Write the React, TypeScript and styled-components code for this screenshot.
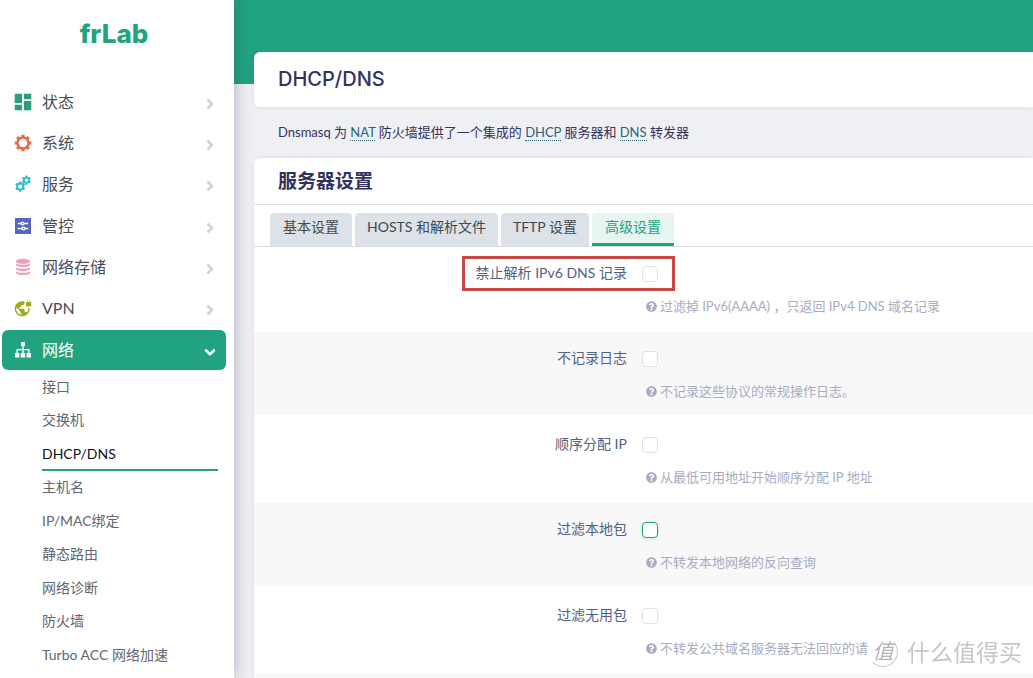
import React from "react";
import styled, { createGlobalStyle, css } from "styled-components";
import { MdDashboard, MdVpnLock } from "react-icons/md";
import { FaQuestionCircle } from "react-icons/fa";

const green = "#22a37f";

const GlobalStyle = createGlobalStyle`
  * { box-sizing: border-box; }
  body {
    margin: 0;
    background: #eff0f3;
    color: #32325d;
    font-family: Lato, "Noto Sans CJK SC", sans-serif;
    font-size: 14px;
  }
  h1, h2, p, ul { margin: 0; padding: 0; }
  ul { list-style: none; }
  a { color: inherit; text-decoration: none; }
`;

const Page = styled.div`
  display: flex;
  height: 100vh;
  overflow: hidden;
`;

const Sidebar = styled.aside`
  flex: 0 0 234px;
  z-index: 1;
  background: #fff;
  box-shadow: 0 0 16px rgba(40, 45, 80, 0.35);
`;

const Brand = styled.a`
  display: block;
  height: 82px;
  padding-right: 6px;
  color: ${green};
  font-family: Inter, sans-serif;
  font-size: 26px;
  font-weight: 800;
  line-height: 68px;
  text-align: center;
`;

const Menu = styled.ul`
  padding: 0 8px 0 2px;
`;

const MenuItem = styled.li`
  margin-bottom: 1px;
  &:nth-child(3n) { margin-bottom: 2px; }
`;

const MenuLink = styled.a<{ $active?: boolean }>`
  display: flex;
  align-items: center;
  height: 40px;
  padding: 0 10px 0 12px;
  border-radius: 6px;
  color: #4a4d55;
  font-size: 16px;
  line-height: 24px;
  ${(p) => p.$active && css`
    background: ${green};
    color: #fff;
  `}
`;

const MenuIcon = styled.span<{ $color: string }>`
  display: flex;
  justify-content: center;
  width: 18px;
  margin-right: 10px;
  color: ${(p) => p.$color};
  svg { flex-shrink: 0; }
`;

const Arrow = styled.span`
  display: flex;
  justify-content: center;
  width: 12px;
  margin-left: auto;
  padding-top: 3px;
  color: #ced4da;
  ${MenuLink}[aria-expanded="true"] & { color: #fff; }
`;

const SubMenu = styled.ul`
  padding: 1px 8px 0 40px;
`;

const SubItem = styled.li`
  &:nth-child(even) { margin-bottom: 1px; }
`;

const SubLink = styled.a<{ $active?: boolean }>`
  display: block;
  height: 33px;
  border-bottom: 2px solid ${(p) => (p.$active ? green : "transparent")};
  color: ${(p) => (p.$active ? "#111" : "#63666e")};
  line-height: 32px;
`;

const Main = styled.main`
  flex: 1;
  min-width: 0;
  padding: 52px 0 0 20px;
  background: linear-gradient(${green} 84px, transparent 84px);
`;

const Card = styled.section`
  background: #fff;
  border-radius: 6px 0 0 6px;
  box-shadow: 0 0 4px rgba(50, 50, 93, 0.1);
`;

const PageTitle = styled.h1`
  padding: 12px 24px;
  font-family: Inter, sans-serif;
  font-size: 20px;
  font-weight: 500;
  line-height: 31px;
`;

const Intro = styled.p`
  padding: 15px 24px 16px;
  font-size: 13px;
  line-height: 20px;
`;

const Abbr = styled.abbr`
  color: #2b6379;
  text-decoration: none;
  border-bottom: 1px dotted #2b6379;
`;

const SectionTitle = styled.h2`
  padding: 8px 24px;
  border-bottom: 1px solid #e0e3e6;
  font-size: 19px;
  font-weight: 700;
  line-height: 30px;
`;

const Tabs = styled.div`
  display: flex;
  gap: 3px;
  padding: 8px 16px 0;
  border-bottom: 1px solid #d9dcdf;
`;

const Tab = styled.button<{ $active?: boolean }>`
  min-width: 82px;
  height: 33px;
  padding: 0 12px;
  border: 0;
  border-bottom: 3px solid ${(p) => (p.$active ? green : "#dce2e7")};
  border-radius: 4px 4px 0 0;
  background: ${(p) => (p.$active ? "#e6f5f1" : "#dce2e7")};
  color: ${(p) => (p.$active ? green : "#43484e")};
  font: inherit;
  line-height: 28px;
  padding-bottom: 2px;
`;

const Options = styled.div`
  display: flex;
  flex-direction: column;
`;

const Row = styled.div`
  display: grid;
  grid-template-columns: 48% 1fr;
  height: 83px;
  &:nth-child(even) {
    margin: 2px 0 3px;
    background: #f8f8f8;
  }
`;

const Label = styled.label`
  justify-self: end;
  position: relative;
  height: 52px;
  margin-right: 1px;
  color: #525f7f;
  line-height: 52px;
`;

const Highlight = styled.span`
  position: absolute;
  inset: 9px -48px 8px -14px;
  border: 3px solid #c94a45;
  pointer-events: none;
`;

const Field = styled.div`
  padding: 19px 0 0 14px;
`;

const Checkbox = styled.input`
  display: block;
  appearance: none;
  width: 16px;
  height: 16px;
  margin: 0;
  border: 1px solid #dee2e6;
  border-radius: 4px;
  background: #fff;
  &.hover {
    border-color: ${green};
    box-shadow: 0 1px 4px rgba(34, 163, 127, 0.2);
  }
`;

const Hint = styled.p`
  display: flex;
  align-items: center;
  gap: 3px;
  padding: 14px 0 0 4px;
  color: #a9acc0;
  font-size: 13px;
  line-height: 20px;
  white-space: nowrap;
`;

const Watermark = styled.div`
  position: fixed;
  right: 11px;
  bottom: 10px;
  display: flex;
  align-items: center;
  gap: 9px;
  color: #c6c6c6;
  font-size: 23px;
  line-height: 32px;
  text-shadow: -1px -1px 0 #fff;
`;

const Seal = styled.span`
  width: 30px;
  height: 30px;
  border: 1px solid transparent;
  border-right-color: #c4c4c4;
  border-bottom-color: #c4c4c4;
  border-radius: 50%;
  background: #fff;
  color: #b4b4b4;
  font-size: 21px;
  font-style: italic;
  line-height: 26px;
  text-align: center;
`;

const teeth = [0, 45, 90, 135, 180, 225, 270, 315];
const cogTeeth = [0, 60, 120, 180, 240, 300];

const GearIcon = () => (
  <svg width="18" height="18" viewBox="0 0 18 18">
    <circle cx="9" cy="9" r="5.5" fill="none" stroke="currentColor" strokeWidth="2.4" />
    {teeth.map((a) => (
      <rect key={a} x="7.4" y="0.8" width="3.2" height="3" fill="currentColor" transform={`rotate(${a} 9 9)`} />
    ))}
  </svg>
);

const Cog = ({ x, y, r }: { x: number; y: number; r: number }) => (
  <g transform={`translate(${x} ${y})`}>
    <circle r={r} fill="none" stroke="currentColor" strokeWidth="1.9" />
    {cogTeeth.map((a) => (
      <rect key={a} x="-1.1" y={-r - 2} width="2.2" height="1.8" fill="currentColor" transform={`rotate(${a})`} />
    ))}
  </g>
);

const CogPairIcon = () => (
  <svg width="18" height="18" viewBox="0 0 18 18">
    <Cog x={6.2} y={11.6} r={3.1} />
    <Cog x={12.4} y={5.2} r={2.6} />
  </svg>
);

const SlidersIcon = () => (
  <svg width="16" height="16" viewBox="0 0 16 16">
    <rect width="16" height="16" fill="currentColor" />
    <g fill="none" stroke="#fff" strokeWidth="1.3">
      <path d="M2.6 5.5h3.5M8.9 5.5h4.3M2.6 10.5h4.5M9.9 10.5h3.3" />
      <circle cx="7.5" cy="5.5" r="1.4" />
      <circle cx="8.5" cy="10.5" r="1.4" />
    </g>
  </svg>
);

const DiscsIcon = () => (
  <svg width="16" height="18" viewBox="0 0 16 18" fill="currentColor">
    <ellipse cx="8" cy="3.4" rx="7" ry="2.6" />
    {[0, 4, 8].map((y) => (
      <path key={y} d={`M1 ${5.2 + y}C3 ${7.4 + y} 13 ${7.4 + y} 15 ${5.2 + y}V${7 + y}C14 ${9.8 + y} 2 ${9.8 + y} 1 ${7 + y}Z`} />
    ))}
  </svg>
);

const SitemapIcon = () => (
  <svg width="18" height="18" viewBox="0 0 18 18" fill="currentColor">
    <path d="M7 1h4v4H7zM1 12h4.4v4.4H1zM6.8 12h4.4v4.4H6.8zM12.6 12H17v4.4h-4.4z" />
    <path d="M9 5v7M3.2 12V8.6h11.6V12" fill="none" stroke="currentColor" strokeWidth="1.4" />
  </svg>
);

const ChevronIcon = ({ down }: { down?: boolean }) => (
  <svg width="12" height="12" viewBox="0 0 12 12" fill="none" stroke="currentColor" strokeWidth="2.6">
    <path d={down ? "M1.3 3.8L6 8.3l4.7-4.5" : "M3.4 1.5L7.9 6l-4.5 4.5"} />
  </svg>
);

const menu = [
  { text: "状态", color: "#2a9d7c", icon: <MdDashboard size={22} /> },
  { text: "系统", color: "#e8694a", icon: <GearIcon /> },
  { text: "服务", color: "#35bcd4", icon: <CogPairIcon /> },
  { text: "管控", color: "#5a66b8", icon: <SlidersIcon /> },
  { text: "网络存储", color: "#eda0b6", icon: <DiscsIcon /> },
  { text: "VPN", color: "#a0a91e", icon: <MdVpnLock size={18} /> },
];

const subMenu = ["接口", "交换机", "DHCP/DNS", "主机名", "IP/MAC绑定", "静态路由", "网络诊断", "防火墙", "Turbo ACC 网络加速"];

const tabs = ["基本设置", "HOSTS 和解析文件", "TFTP 设置", "高级设置"];

const options = [
  { id: "filter_aaaa", label: "禁止解析 IPv6 DNS 记录", hint: "过滤掉 IPv6(AAAA) ，只返回 IPv4 DNS 域名记录", marked: true },
  { id: "quietdhcp", label: "不记录日志", hint: "不记录这些协议的常规操作日志。" },
  { id: "sequential_ip", label: "顺序分配 IP", hint: "从最低可用地址开始顺序分配 IP 地址" },
  { id: "boguspriv", label: "过滤本地包", hint: "不转发本地网络的反向查询", hover: true },
  { id: "filterwin2k", label: "过滤无用包", hint: "不转发公共域名服务器无法回应的请" },
];

export default function App() {
  return (
    <>
      <GlobalStyle />
      <Page>
        <Sidebar>
          <Brand href="#">frLab</Brand>
          <Menu>
            {menu.map((m) => (
              <MenuItem key={m.text}>
                <MenuLink href="#">
                  <MenuIcon $color={m.color}>{m.icon}</MenuIcon>
                  {m.text}
                  <Arrow><ChevronIcon /></Arrow>
                </MenuLink>
              </MenuItem>
            ))}
            <MenuItem>
              <MenuLink href="#" $active aria-expanded="true">
                <MenuIcon $color="#fff"><SitemapIcon /></MenuIcon>
                网络
                <Arrow><ChevronIcon down /></Arrow>
              </MenuLink>
              <SubMenu>
                {subMenu.map((s) => (
                  <SubItem key={s}>
                    <SubLink href="#" $active={s === "DHCP/DNS"}>{s}</SubLink>
                  </SubItem>
                ))}
              </SubMenu>
            </MenuItem>
          </Menu>
        </Sidebar>
        <Main>
          <Card>
            <PageTitle>DHCP/DNS</PageTitle>
          </Card>
          <Intro>
            Dnsmasq 为 <Abbr>NAT</Abbr> 防火墙提供了一个集成的 <Abbr>DHCP</Abbr> 服务器和 <Abbr>DNS</Abbr> 转发器
          </Intro>
          <Card>
            <SectionTitle>服务器设置</SectionTitle>
            <Tabs>
              {tabs.map((t) => (
                <Tab key={t} type="button" $active={t === "高级设置"}>{t}</Tab>
              ))}
            </Tabs>
            <Options>
              {options.map((o) => (
                <Row key={o.id}>
                  <Label htmlFor={o.id}>
                    {o.label}
                    {o.marked && <Highlight />}
                  </Label>
                  <Field>
                    <Checkbox type="checkbox" id={o.id} className={o.hover ? "hover" : undefined} />
                    <Hint><FaQuestionCircle size={11} />{o.hint}</Hint>
                  </Field>
                </Row>
              ))}
              <Row />
            </Options>
          </Card>
        </Main>
      </Page>
      <Watermark>
        <Seal>值</Seal>
        什么值得买
      </Watermark>
    </>
  );
}
